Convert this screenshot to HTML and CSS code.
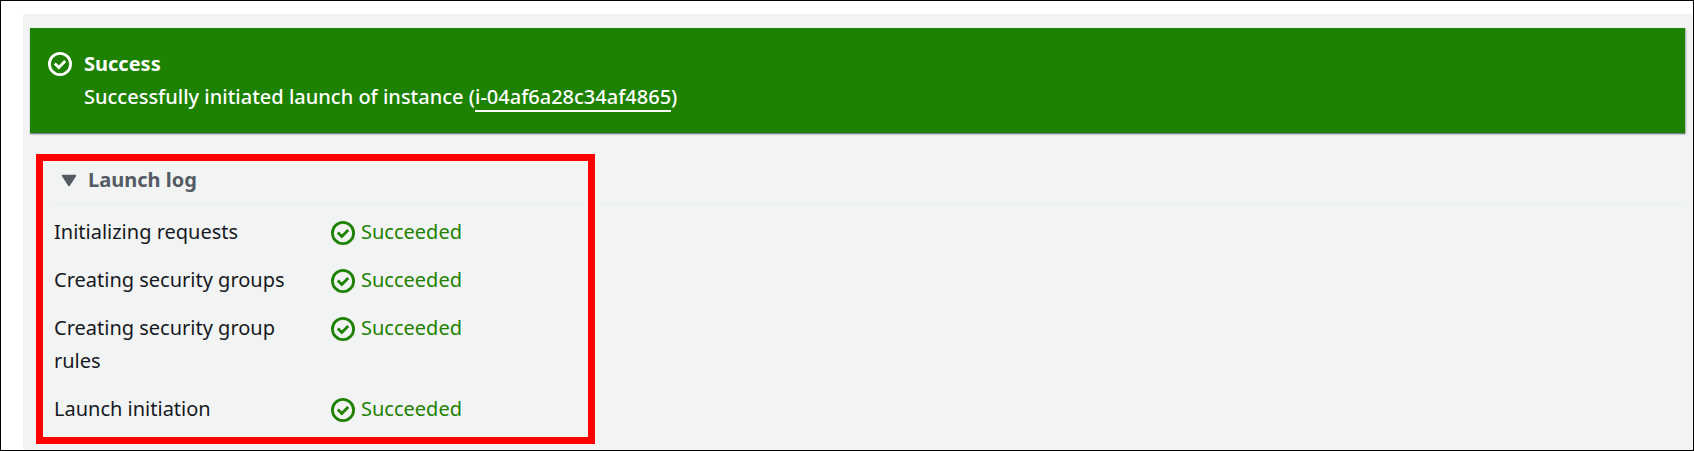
FILE: index.html
```html
<!DOCTYPE html>
<html lang="en">
<head>
<meta charset="utf-8">
<title>Launch instance</title>
<link rel="stylesheet" href="styles.css">
</head>
<body>
<svg class="sprite" aria-hidden="true">
  <symbol id="check" viewBox="0 0 24 24">
    <circle cx="12" cy="12" r="10.6" fill="none" stroke="currentColor" stroke-width="2.8"/>
    <path d="M6.8 11.6l4 3.9 6.4-6.5" fill="none" stroke="currentColor" stroke-width="2.8"/>
  </symbol>
</svg>
<main class="page">
  <section class="banner" role="status">
    <svg class="icon banner-icon" aria-hidden="true"><use href="#check"/></svg>
    <div>
      <h1 class="banner-title">Success</h1>
      <p class="banner-text">Successfully initiated launch of instance (<a class="banner-link" href="#instance">i-04af6a28c34af4865</a>)</p>
    </div>
  </section>
  <section class="log">
    <h2 class="log-header">
      <button class="log-toggle" type="button" aria-expanded="true" aria-controls="log-steps">
        <svg class="caret" viewBox="0 0 16 14" aria-hidden="true"><path d="M1.5 2.5h13L8 12.5z" fill="currentColor" stroke="currentColor" stroke-width="1.6" stroke-linejoin="round"/></svg>
        Launch log
      </button>
    </h2>
    <dl class="steps" id="log-steps">
      <dt>Initializing requests</dt>
      <dd class="status"><svg class="icon" aria-hidden="true"><use href="#check"/></svg>Succeeded</dd>
      <dt>Creating security groups</dt>
      <dd class="status"><svg class="icon" aria-hidden="true"><use href="#check"/></svg>Succeeded</dd>
      <dt>Creating security group rules</dt>
      <dd class="status"><svg class="icon" aria-hidden="true"><use href="#check"/></svg>Succeeded</dd>
      <dt>Launch initiation</dt>
      <dd class="status"><svg class="icon" aria-hidden="true"><use href="#check"/></svg>Succeeded</dd>
    </dl>
    <div class="highlight"></div>
  </section>
</main>
</body>
</html>
```
FILE: styles.css
```css
* {
  box-sizing: border-box;
}

body {
  margin: 0;
  min-height: 100vh;
  display: flex;
  flex-direction: column;
  padding: 13px 0 0 22px;
  border: 1px solid #000;
  background: #fff;
  color: #16191f;
  font: 20px/33px "Noto Sans", "Open Sans", sans-serif;
}

h1, h2, p, dl, dd {
  margin: 0;
}

.sprite {
  position: absolute;
  width: 0;
  height: 0;
}

.page {
  flex: 1;
  padding: 14px 8px 0 7px;
  background: #f2f3f3;
}

.icon {
  flex: none;
  width: 24px;
  height: 24px;
}

.banner {
  display: flex;
  gap: 12px;
  padding: 19px 18px 20px;
  background: #1d8102;
  color: #fff;
  box-shadow: 0 1px 1px rgba(0, 28, 36, 0.4), 1px 1px 2px rgba(0, 28, 36, 0.3);
}

.banner-icon {
  margin-top: 5px;
}

.banner-title {
  font-size: 20px;
  font-weight: 700;
}

.banner-text {
  font-weight: 500;
}

.banner-link {
  color: inherit;
  text-decoration: none;
  border-bottom: 2px solid currentColor;
}

.log {
  position: relative;
  padding: 28px 0 0 24px;
}

.log-header {
  padding: 2px 0 7px;
  border-bottom: 1px solid #eaeded;
  font-size: 20px;
}

.log-toggle {
  display: flex;
  align-items: center;
  gap: 11px;
  padding: 0 7px;
  border: 0;
  background: none;
  color: #545b64;
  font: inherit;
  font-weight: 700;
}

.caret {
  width: 16px;
  height: 14px;
}

.steps {
  display: grid;
  grid-template-columns: 248px 1fr;
  gap: 15px 29px;
  padding: 11px 0 24px;
}

.status {
  display: flex;
  align-items: flex-start;
  gap: 6px;
  color: #1d8102;
}

.status .icon {
  margin-top: 6px;
}

.highlight {
  position: absolute;
  top: 21px;
  bottom: 5px;
  left: 6px;
  width: 559px;
  border: 7px solid #f00;
  pointer-events: none;
}
```
